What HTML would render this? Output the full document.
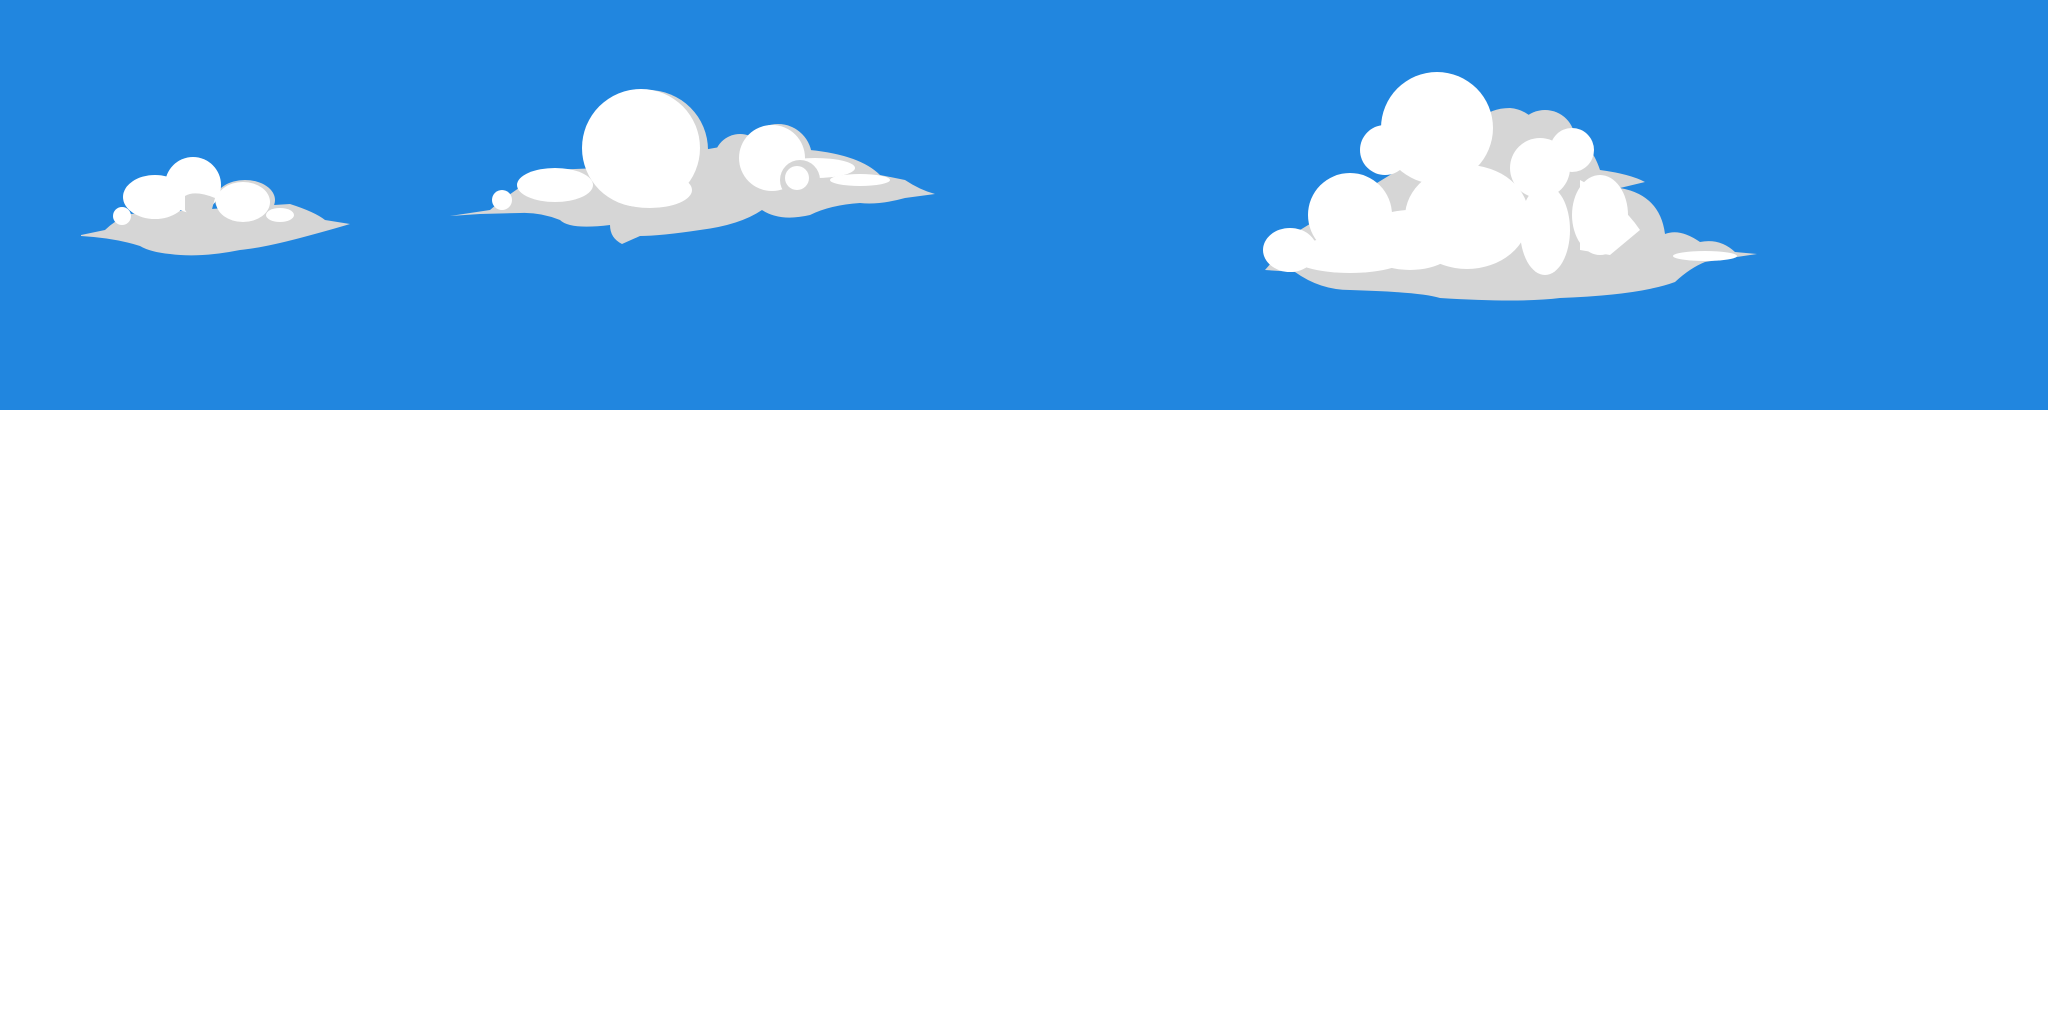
<!DOCTYPE html>
<html><head><meta charset="utf-8"><style>
html,body{margin:0;padding:0;background:#fff;width:2048px;height:1024px;overflow:hidden}
svg{display:block}
</style></head><body>
<svg width="2048" height="1024" viewBox="0 0 2048 1024" xmlns="http://www.w3.org/2000/svg">
<rect x="0" y="0" width="2048" height="410" fill="#2186df"/>
<!-- cloud 1 -->
<g>
<path d="M81,235 L105,230 Q115,220 130,214 L290,204 Q315,212 325,220 L350,224 Q330,230 300,238 Q262,248 240,250 Q200,258 170,254 Q150,252 140,246 Q115,238 81,236 Z" fill="#d6d6d6"/>
<ellipse cx="245" cy="200" rx="30" ry="20" fill="#d6d6d6"/>
<ellipse cx="155" cy="197" rx="32" ry="22" fill="#fff"/>
<circle cx="193" cy="185" r="28" fill="#fff"/>
<ellipse cx="243" cy="202" rx="27" ry="20" fill="#fff"/>
<ellipse cx="280" cy="215" rx="14" ry="7" fill="#fff"/>
<circle cx="122" cy="216" r="9" fill="#fff"/>
<path d="M185,196 Q195,190 215,198 L205,235 Q195,225 185,210 Z" fill="#d6d6d6"/>
</g>
<!-- cloud 2 -->
<g>
<path d="M450,216 L490,210 Q515,188 550,170 L600,168 L760,140 Q790,130 810,150 Q860,155 880,175 L905,180 Q920,190 935,194 L905,198 Q880,205 860,203 Q830,205 810,215 Q780,222 762,210 Q740,225 700,230 Q660,236 640,236 L622,244 Q610,238 610,225 Q570,230 560,220 Q540,212 520,213 L480,214 Z" fill="#d6d6d6"/>
<circle cx="648" cy="150" r="60" fill="#d6d6d6"/>
<circle cx="778" cy="158" r="34" fill="#d6d6d6"/>
<circle cx="740" cy="160" r="26" fill="#d6d6d6"/>
<circle cx="641" cy="148" r="59" fill="#fff"/>
<ellipse cx="555" cy="185" rx="38" ry="17" fill="#fff"/>
<ellipse cx="650" cy="190" rx="42" ry="18" fill="#fff"/>
<circle cx="772" cy="158" r="33" fill="#fff"/>
<ellipse cx="815" cy="168" rx="40" ry="10" fill="#fff"/>
<ellipse cx="860" cy="180" rx="30" ry="6" fill="#fff"/>
<circle cx="502" cy="200" r="10" fill="#fff"/>
<circle cx="800" cy="180" r="20" fill="#d6d6d6"/>
<circle cx="797" cy="178" r="12" fill="#fff"/>
</g>
<!-- cloud 3 -->
<g>
<path d="M1265,270 L1295,272 Q1320,290 1350,290 Q1420,292 1440,298 Q1520,303 1560,298 Q1640,295 1675,282 Q1690,268 1705,262 L1730,258 L1757,254 L1735,252 Q1720,238 1700,242 Q1680,228 1665,234 Q1660,195 1620,188 L1645,182 Q1630,174 1600,170 Q1590,140 1570,138 Q1550,136 1545,140 Q1535,110 1510,108 Q1490,108 1480,120 L1300,230 Z" fill="#d6d6d6"/>
<circle cx="1545" cy="140" r="30" fill="#d6d6d6"/>
<circle cx="1437" cy="128" r="56" fill="#fff"/>
<circle cx="1385" cy="150" r="25" fill="#fff"/>
<circle cx="1350" cy="215" r="42" fill="#fff"/>
<ellipse cx="1290" cy="250" rx="27" ry="22" fill="#fff"/>
<ellipse cx="1350" cy="255" rx="60" ry="18" fill="#fff"/>
<ellipse cx="1467" cy="217" rx="62" ry="52" fill="#fff"/>
<ellipse cx="1410" cy="240" rx="50" ry="30" fill="#fff"/>
<circle cx="1540" cy="168" r="30" fill="#fff"/>
<ellipse cx="1545" cy="230" rx="25" ry="45" fill="#fff"/>
<circle cx="1572" cy="150" r="22" fill="#fff"/>
<ellipse cx="1600" cy="215" rx="28" ry="40" fill="#fff"/>
<path d="M1580,180 Q1620,200 1640,230 L1610,255 L1580,250 Z" fill="#fff"/>
<ellipse cx="1705" cy="256" rx="32" ry="5" fill="#fff"/>
</g>
</svg>
</body></html>
